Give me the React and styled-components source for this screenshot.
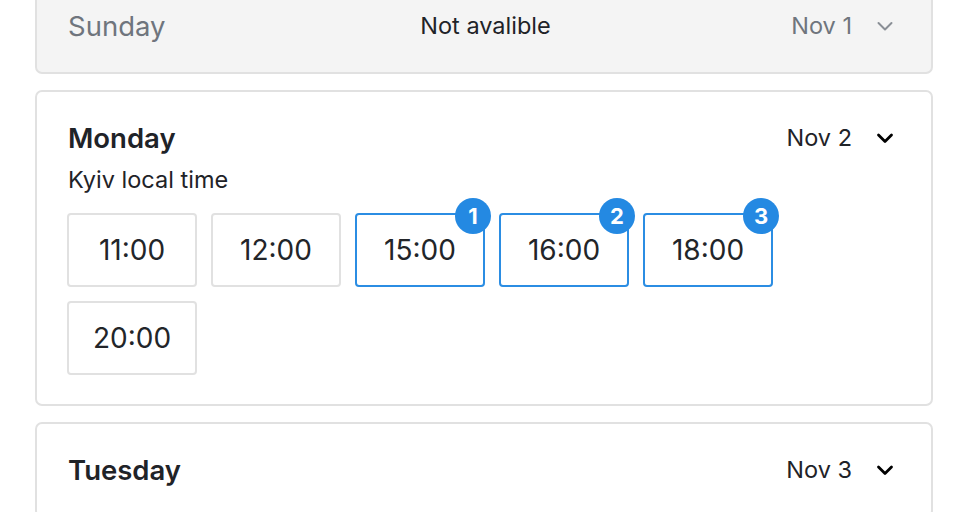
import styled, { createGlobalStyle } from "styled-components";

const GlobalStyle = createGlobalStyle`
  body {
    margin: 0;
    background: #fff;
    font-family: Inter, "Open Sans", "Liberation Sans", sans-serif;
    color: #1f2328;
  }
`;

const List = styled.div`
  display: flex;
  flex-direction: column;
  gap: 16px;
  width: 898px;
  margin-left: 35px;
  margin-top: -22px;
`;

const Card = styled.div`
  border: 2px solid #e1e1e1;
  border-radius: 7px;
  background: ${(p) => (p.disabled ? "#f4f4f4" : "#fff")};
  padding: 30px 34px ${(p) => (p.open ? "29px" : "30px")} 30px;
`;

const Header = styled.div`
  display: grid;
  grid-template-columns: 1fr auto 1fr;
  grid-template-rows: 32px;
  align-items: center;
  line-height: 32px;
  padding-left: 1px;
`;

const DayName = styled.div`
  font-size: 27.5px;
  font-weight: ${(p) => (p.disabled ? 400 : 600)};
  color: ${(p) => (p.disabled ? "#6f757d" : "#1f2328")};
`;

const Status = styled.div`
  font-size: 23.5px;
  color: #1f2328;
  text-align: center;
  padding-left: 6px;
`;

const DateBox = styled.div`
  display: flex;
  align-items: center;
  justify-content: flex-end;
  gap: 21px;
  font-size: 23.5px;
  color: ${(p) => (p.disabled ? "#6f757d" : "#1f2328")};
`;

const Chevron = styled.svg`
  width: 24px;
  height: 24px;
  display: block;
`;

const Note = styled.div`
  font-size: 23.5px;
  line-height: 28px;
  margin-top: 12px;
  padding-left: 1px;
  color: #1f2328;
`;

const Slots = styled.div`
  display: flex;
  flex-wrap: wrap;
  gap: 14px;
  margin-top: 19px;
  width: 720px;
`;

const Slot = styled.div`
  position: relative;
  box-sizing: border-box;
  width: 130px;
  height: 74px;
  display: flex;
  align-items: center;
  justify-content: center;
  font-size: 28px;
  color: #222529;
  border: 2px solid ${(p) => (p.selected ? "#2b8de3" : "#e1e1e1")};
  border-radius: 4px;
`;

const Badge = styled.span`
  position: absolute;
  top: -17px;
  right: -8px;
  width: 36px;
  height: 36px;
  border-radius: 50%;
  background: #2489e2;
  color: #fff;
  font-size: 22px;
  font-weight: 700;
  display: flex;
  align-items: center;
  justify-content: center;
`;

function ChevronIcon({ muted }) {
  return (
    <Chevron viewBox="0 0 24 24" fill="none">
      <polyline
        points="5.5,9 12,15.5 18.5,9"
        stroke={muted ? "#8a8f96" : "#000"}
        strokeWidth={muted ? 2 : 2.8}
        strokeLinecap="round"
        strokeLinejoin="round"
      />
    </Chevron>
  );
}

const days = [
  { name: "Sunday", date: "Nov 1", disabled: true },
  {
    name: "Monday",
    date: "Nov 2",
    slots: [
      { time: "11:00" },
      { time: "12:00" },
      { time: "15:00", order: 1 },
      { time: "16:00", order: 2 },
      { time: "18:00", order: 3 },
      { time: "20:00" },
    ],
  },
  { name: "Tuesday", date: "Nov 3" },
];

export default function App() {
  return (
    <>
      <GlobalStyle />
      <List>
        {days.map((d) => (
          <Card key={d.name} disabled={d.disabled} open={!!d.slots}>
            <Header>
              <DayName disabled={d.disabled}>{d.name}</DayName>
              <Status>{d.disabled ? "Not avalible" : ""}</Status>
              <DateBox disabled={d.disabled}>
                {d.date}
                <ChevronIcon muted={d.disabled} />
              </DateBox>
            </Header>
            {d.slots && (
              <>
                <Note>Kyiv local time</Note>
                <Slots>
                  {d.slots.map((s) => (
                    <Slot key={s.time} selected={!!s.order}>
                      {s.time}
                      {s.order && <Badge>{s.order}</Badge>}
                    </Slot>
                  ))}
                </Slots>
              </>
            )}
          </Card>
        ))}
      </List>
    </>
  );
}
